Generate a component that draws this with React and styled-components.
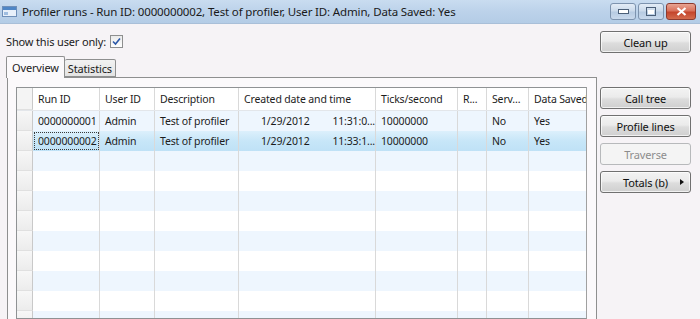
import React from 'react'
import styled, { createGlobalStyle } from 'styled-components'

const GlobalStyle = createGlobalStyle`
  html, body {
    margin: 0;
    padding: 0;
    background: #f6f3f6;
  }
  body {
    font-family: "Noto Sans", "Open Sans", sans-serif;
    font-size: 10.5px;
    letter-spacing: -0.15px;
    color: #1b1b1b;
  }
`

const Window = styled.div`
  width: 700px;
  height: 319px;
  overflow: hidden;
  display: flex;
  flex-direction: column;
  background: #f6f3f6;
`

const TitleBar = styled.div`
  height: 23px;
  flex: none;
  display: flex;
  align-items: center;
  padding-left: 2px;
  background: linear-gradient(to bottom, #c9dcf0 0%, #bcd2ea 50%, #b4cce6 100%);
  border-bottom: 1px solid #a9bfd8;
`

const Title = styled.div`
  flex: 1;
  margin-left: 4px;
  font-size: 11.5px;
  color: #1a1a1a;
  white-space: nowrap;
`

const CaptionButtons = styled.div`
  display: flex;
  align-self: flex-start;
  margin-top: 3px;
  gap: 2px;
  margin-right: 4px;
`

const CaptionButton = styled.div`
  width: ${p => (p.close ? 28 : 24)}px;
  height: 15px;
  border: 1px solid ${p => (p.close ? '#8c3a2f' : '#7d93ae')};
  border-radius: 3px;
  display: flex;
  align-items: center;
  justify-content: center;
  background: ${p =>
    p.close
      ? 'linear-gradient(to bottom, #e8a493 0%, #d9725c 45%, #c4452c 55%, #d36b4d 100%)'
      : 'linear-gradient(to bottom, #e3ecf6 0%, #cbdaeb 45%, #b7cbe2 55%, #c9d9ec 100%)'};
`

const Body = styled.div`
  flex: 1;
  display: flex;
  min-height: 0;
`

const LeftPane = styled.div`
  width: 591px;
  padding-left: 6px;
  display: flex;
  flex-direction: column;
`

const FilterRow = styled.label`
  display: flex;
  align-items: center;
  height: 16px;
  margin-top: 9px;
  gap: 4px;
  white-space: nowrap;
  font-size: 11px;
`

const CheckBox = styled.span`
  width: 11px;
  height: 11px;
  border: 1px solid #8e8f8f;
  background: linear-gradient(to bottom, #eaeaea, #ffffff);
  display: flex;
  align-items: center;
  justify-content: center;
`

const TabStrip = styled.div`
  display: flex;
  align-items: flex-end;
  height: 22px;
  margin-top: 6px;
`

const Tab = styled.div`
  height: ${p => (p.active ? 22 : 18)}px;
  padding: 0 ${p => (p.active ? 5 : 3)}px;
  display: flex;
  align-items: center;
  font-size: 11px;
  border: 1px solid #8e8f8f;
  border-bottom: ${p => (p.active ? 'none' : '1px solid #8e8f8f')};
  border-left: ${p => (p.active ? '1px solid #8e8f8f' : 'none')};
  border-radius: 2px 2px 0 0;
  background: ${p =>
    p.active ? '#fbf9fb' : 'linear-gradient(to bottom, #f2f2f2, #e3e3e3)'};
  margin-bottom: ${p => (p.active ? -1 : 0)}px;
  position: relative;
  z-index: ${p => (p.active ? 1 : 0)};
  box-sizing: border-box;
`

const TabPanel = styled.div`
  flex: 1;
  margin-left: 1px;
  border: 1px solid #8e8f8f;
  border-bottom: none;
  background: #fbf9fb;
  padding: 9px 9px 0 8px;
  min-height: 0;
  display: flex;
`

const Grid = styled.div`
  width: 570px;
  border: 1px solid #8f9294;
  border-right: 1px solid #a0a0a0;
  background: #ffffff;
  overflow: hidden;
`

const Row = styled.div`
  display: flex;
  height: ${p => (p.header ? 22 : 20)}px;
  background: ${p =>
    p.selected
      ? 'linear-gradient(to bottom, #dcf0fc 0%, #c7e6f8 50%, #bfe1f6 100%)'
      : p.header
      ? '#ffffff'
      : p.striped
      ? '#eef6fe'
      : '#ffffff'};
  ${p => (p.header ? 'border-bottom: 1px solid #e3e6ea;' : '')}
`

const Selector = styled.div`
  width: 16px;
  flex: none;
  box-sizing: border-box;
  border-right: 1px solid #c9c9c9;
  border-bottom: 1px solid #e0e0e0;
  background: ${p => (p.header ? '#f4f4f4' : 'linear-gradient(to bottom, #f7f7f7, #ececec)')};
`

const Cell = styled.div`
  width: ${p => p.w}px;
  flex: none;
  box-sizing: border-box;
  padding-left: 5px;
  border-right: 1px solid #d9d9d9;
  display: flex;
  align-items: center;
  white-space: nowrap;
  overflow: hidden;
  color: #1c1c1c;
  ${p => (p.focus ? 'outline: 1px dotted #3a3a3a; outline-offset: -2px;' : '')}
`

const DateText = styled.span`
  margin-left: 17px;
  width: 74px;
`

const SidePane = styled.div`
  flex: 1;
  display: flex;
  flex-direction: column;
  padding-left: 3px;
  padding-top: 7px;
`

const Button = styled.div`
  width: 91px;
  height: 22px;
  flex: none;
  box-sizing: border-box;
  border: 1px solid ${p => (p.disabled ? '#b7b9bb' : '#707070')};
  border-radius: 3px;
  display: flex;
  align-items: center;
  justify-content: center;
  font-size: 11px;
  color: ${p => (p.disabled ? '#8d8d8d' : '#111111')};
  margin-top: ${p => (p.gap === undefined ? 6 : p.gap)}px;
  position: relative;
  background: ${p =>
    p.disabled
      ? '#f4f4f4'
      : 'linear-gradient(to bottom, #f3f3f3 0%, #ebebeb 45%, #dddddd 55%, #cfcfcf 100%)'};
  box-shadow: ${p => (p.disabled ? 'none' : 'inset 0 0 0 1px rgba(255,255,255,0.7)')};
`

const Arrow = styled.span`
  position: absolute;
  right: 6px;
  top: 7px;
  width: 0;
  height: 0;
  border-left: 4px solid #111;
  border-top: 3.5px solid transparent;
  border-bottom: 3.5px solid transparent;
`

const columns = [
  { key: 'runId', label: 'Run ID', w: 67 },
  { key: 'user', label: 'User ID', w: 55 },
  { key: 'desc', label: 'Description', w: 84 },
  { key: 'created', label: 'Created date and time', w: 137 },
  { key: 'ticks', label: 'Ticks/second', w: 82 },
  { key: 'r', label: 'R...', w: 29 },
  { key: 'serv', label: 'Serv...', w: 42 },
  { key: 'saved', label: 'Data Saved', w: 80 },
]

const runs = [
  { runId: '0000000001', user: 'Admin', desc: 'Test of profiler', date: '1/29/2012', time: '11:31:0...', ticks: '10000000', r: '', serv: 'No', saved: 'Yes' },
  { runId: '0000000002', user: 'Admin', desc: 'Test of profiler', date: '1/29/2012', time: '11:33:1...', ticks: '10000000', r: '', serv: 'No', saved: 'Yes' },
]

function AppIcon() {
  return (
    <svg width="16" height="13" viewBox="0 0 16 13">
      <rect x="0.5" y="1.5" width="14" height="10" fill="#e8f0fa" stroke="#6f8fb8" />
      <rect x="1" y="2" width="13" height="3" fill="#4f86c6" />
      <rect x="2" y="7" width="4" height="3" fill="#9fbde0" />
    </svg>
  )
}

function Check() {
  return (
    <svg width="9" height="9" viewBox="0 0 9 9">
      <path d="M1 4.5 L3.5 7 L8 1.5" fill="none" stroke="#2c58a8" strokeWidth="1.6" />
    </svg>
  )
}

function GridRow({ run, index }) {
  const selected = index === 1
  const striped = index % 2 === 0
  return (
    <Row selected={selected} striped={striped}>
      <Selector />
      {columns.map(c => (
        <Cell key={c.key} w={c.w} focus={selected && c.key === 'runId'}>
          {run && c.key === 'created' ? (
            <>
              <DateText>{run.date}</DateText>
              <span>{run.time}</span>
            </>
          ) : run ? (
            run[c.key]
          ) : null}
        </Cell>
      ))}
    </Row>
  )
}

export default function App() {
  const rows = Array.from({ length: 12 }, (_, i) => runs[i] || null)
  return (
    <Window>
      <GlobalStyle />
      <TitleBar>
        <AppIcon />
        <Title>Profiler runs - Run ID: 0000000002, Test of profiler, User ID: Admin, Data Saved: Yes</Title>
        <CaptionButtons>
          <CaptionButton>
            <svg width="11" height="5" viewBox="0 0 11 5">
              <rect x="0.5" y="0.5" width="10" height="4" fill="#fff" stroke="#4b5f78" />
            </svg>
          </CaptionButton>
          <CaptionButton>
            <svg width="10" height="9" viewBox="0 0 10 9">
              <rect x="0.5" y="0.5" width="9" height="8" fill="none" stroke="#4b5f78" />
              <rect x="2" y="3" width="6" height="4" fill="#fff" />
            </svg>
          </CaptionButton>
          <CaptionButton close>
            <svg width="11" height="9" viewBox="0 0 11 9">
              <path d="M1.5 1 L9.5 8 M9.5 1 L1.5 8" stroke="#fff" strokeWidth="2.2" />
            </svg>
          </CaptionButton>
        </CaptionButtons>
      </TitleBar>
      <Body>
        <LeftPane>
          <FilterRow>
            Show this user only:
            <CheckBox>
              <Check />
            </CheckBox>
          </FilterRow>
          <TabStrip>
            <Tab active>Overview</Tab>
            <Tab>Statistics</Tab>
          </TabStrip>
          <TabPanel>
            <Grid>
              <Row header>
                <Selector header />
                {columns.map(c => (
                  <Cell key={c.key} w={c.w} header>
                    {c.label}
                  </Cell>
                ))}
              </Row>
              {rows.map((run, i) => (
                <GridRow key={i} run={run} index={i} />
              ))}
            </Grid>
          </TabPanel>
        </LeftPane>
        <SidePane>
          <Button gap={0}>Clean up</Button>
          <Button gap={34}>Call tree</Button>
          <Button>Profile lines</Button>
          <Button disabled>Traverse</Button>
          <Button>
            Totals (b)
            <Arrow />
          </Button>
        </SidePane>
      </Body>
    </Window>
  )
}
